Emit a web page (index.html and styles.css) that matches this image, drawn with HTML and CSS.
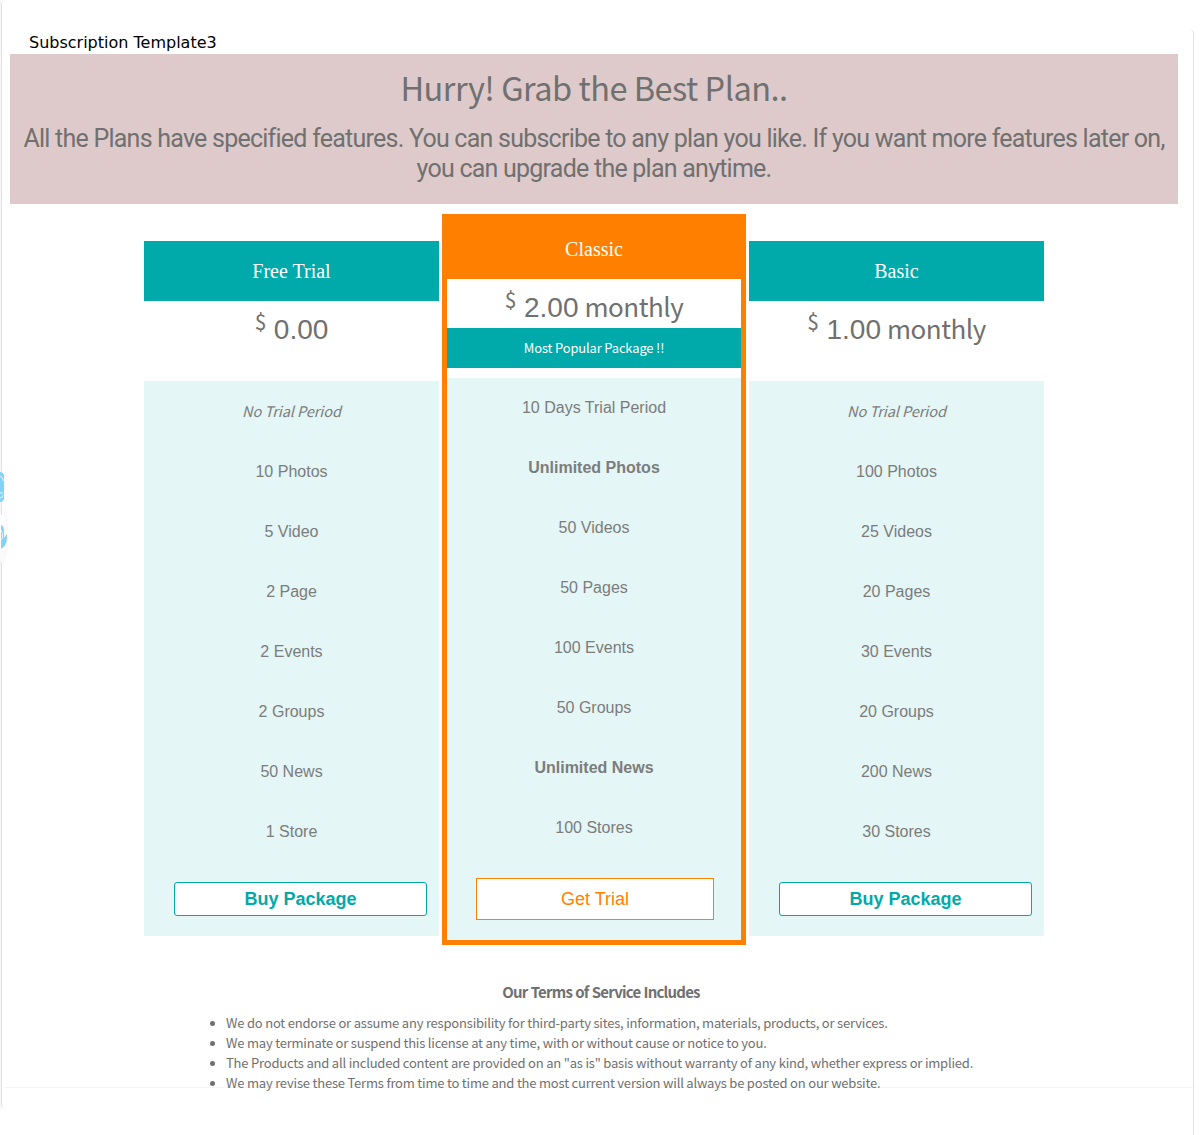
FILE: index.html
```html
<!DOCTYPE html>
<html lang="en">
<head>
<meta charset="utf-8">
<title>Subscription Template3</title>
<link rel="stylesheet" href="styles.css">
</head>
<body>
<div class="frame-left"></div>
<div class="frame-right"></div>
<div class="rule"></div>
<main class="page">
  <div class="title">Subscription Template3</div>
  <header class="banner">
    <h1>Hurry! Grab the Best Plan..</h1>
    <p>All the Plans have specified features. You can subscribe to any plan you like. If you want more features later on, you can upgrade the plan anytime.</p>
  </header>
  <section class="plans">
    <article class="plan">
      <h2>Free Trial</h2>
      <div class="price"><span class="currency">$</span><span class="amount">0.00</span></div>
      <div class="features">
        <ul><li><em>No Trial Period</em></li><li>10 Photos</li><li>5 Video</li><li>2 Page</li><li>2 Events</li><li>2 Groups</li><li>50 News</li><li>1 Store</li></ul>
        <button class="buy">Buy Package</button>
      </div>
    </article>
    <article class="plan featured">
      <h2>Classic</h2>
      <div class="price"><span class="currency">$</span><span class="amount">2.00</span><span class="period">monthly</span></div>
      <div class="ribbon">Most Popular Package !!</div>
      <div class="features">
        <ul><li>10 Days Trial Period</li><li><b>Unlimited Photos</b></li><li>50 Videos</li><li>50 Pages</li><li>100 Events</li><li>50 Groups</li><li><b>Unlimited News</b></li><li>100 Stores</li></ul>
        <button class="buy">Get Trial</button>
      </div>
    </article>
    <article class="plan">
      <h2>Basic</h2>
      <div class="price"><span class="currency">$</span><span class="amount">1.00</span><span class="period">monthly</span></div>
      <div class="features">
        <ul><li><em>No Trial Period</em></li><li>100 Photos</li><li>25 Videos</li><li>20 Pages</li><li>30 Events</li><li>20 Groups</li><li>200 News</li><li>30 Stores</li></ul>
        <button class="buy">Buy Package</button>
      </div>
    </article>
  </section>
  <section class="terms">
    <h3>Our Terms of Service Includes</h3>
    <ul>
      <li><span>We do not endorse or assume any responsibility for third-party sites, information, materials, products, or services.</span></li>
      <li><span>We may terminate or suspend this license at any time, with or without cause or notice to you.</span></li>
      <li><span>The Products and all included content are provided on an "as is" basis without warranty of any kind, whether express or implied.</span></li>
      <li><span>We may revise these Terms from time to time and the most current version will always be posted on our website.</span></li>
    </ul>
  </section>
</main>
<svg class="edge-icons" width="8" height="96" viewBox="0 0 8 96">
  <path d="M0 49H8V97H0Z" fill="#fff"/>
  <path d="M4 38Q8 46 8 58V84Q7 92 3 96H0V84H4V60Z" fill="#fafafa"/>
  <path d="M0 6Q3 6 4 9V33Q3 36 0 36Z" fill="#81d4f7"/>
  <path d="M0 10Q3 11 3.5 15M0 27H3M0 32Q3 31 3.5 29" fill="none" stroke="#fff" stroke-width=".8"/>
  <path d="M1 59Q4 60 4 65V72L7 68V71Q7 80 1 83Z" fill="#81d4f7"/>
  <path d="M1 64Q3 66 2.5 72L1 74" fill="none" stroke="#fff" stroke-width=".8"/>
</svg>
</body>
</html>
```
FILE: styles.css
```css
* { box-sizing: border-box; }
body {
  position: relative;
  margin: 0;
  height: 1135px;
  overflow: hidden;
  background: #fff;
  color: #707070;
  font-family: "Noto Sans CJK JP", "Noto Sans", sans-serif;
}
ul { list-style: none; margin: 0; padding: 0; }
.page { width: 1188px; }
.title {
  height: 54px;
  padding: 33px 0 0 29px;
  color: #000;
  font: 16px/20px "DejaVu Sans", sans-serif;
}
.banner {
  height: 150px;
  margin: 0 10px;
  padding-top: 13px;
  background: #decaca;
  text-align: center;
}
.banner h1 { margin: 0 0 17px; font-weight: 400; font-size: 32.5px; line-height: 40px; letter-spacing: -0.5px; }
.banner p { margin: 0; font: 25px/30px Roboto, sans-serif; letter-spacing: -0.76px; }

.plans {
  display: flex;
  justify-content: center;
  align-items: flex-start;
  gap: 3px;
  padding-top: 10px;
}
.plan { width: 295px; margin-top: 27px; text-align: center; }
.plan h2 {
  height: 60px;
  margin: 0;
  background: #00a9aa;
  color: #fff;
  font: 20px/60px "Liberation Serif", serif;
}
.price { display: flex; justify-content: center; align-items: flex-start; height: 80px; }
.currency { margin-right: 8px; font-size: 21px; line-height: 40px; letter-spacing: -0.5px; }
.amount { font: 28px/57px "Liberation Sans", sans-serif; }
.period { margin-left: 6px; font-size: 26px; line-height: 54px; letter-spacing: -0.5px; }
.features {
  height: 555px;
  padding: 0 12px 20px 30px;
  background: #e4f6f6;
  color: #7c7c7c;
  font: 16px/62px "Liberation Sans", sans-serif;
}
.features ul { margin: 0 -12px 21px -30px; }
.features li { height: 60px; }
.features li:first-child { line-height: 60px; }
.features em { font-family: "Noto Sans CJK JP", sans-serif; font-size: 14.6px; letter-spacing: -0.1px; }
.buy {
  display: block;
  width: 100%;
  height: 34px;
  padding: 0;
  border: 1px solid #00a9aa;
  border-radius: 3px;
  background: #fff;
  color: #00a9aa;
  font: bold 18px "Liberation Sans", sans-serif;
}
.featured { width: 304px; margin-top: 0; border: 5px solid #ff8000; }
.featured h2 { background: #ff8000; }
.featured .price { height: 49px; }
.ribbon {
  height: 40px;
  margin-bottom: 10px;
  background: #00a9aa;
  color: #fff;
  font-size: 13px;
  line-height: 40px;
  letter-spacing: -0.17px;
}
.featured .features { height: 562px; padding: 0 27px 20px 29px; line-height: 60px; }
.featured .features ul { margin: 0 -27px 20px -29px; }
.featured .buy { height: 42px; border-color: #ff8000; border-radius: 0; color: #ff8000; font-weight: 400; }

.terms { padding: 37px 0 0 210px; }
.terms h3 { width: 782px; margin: 0 0 11px; text-align: center; font-size: 15px; line-height: 20px; letter-spacing: -0.8px; word-spacing: 0.6px; }
.terms li { display: flex; align-items: center; height: 20px; font-size: 13px; line-height: 20px; letter-spacing: -0.2px; white-space: nowrap; }
.terms li::before { content: ""; width: 5px; height: 5px; margin-right: 11px; border-radius: 50%; background: #707070; }

.frame-left { position: absolute; left: 0; top: 0; width: 6px; height: 1109px; border-left: 1px solid #f7f7f7; }
.frame-left::before { content: ""; position: absolute; inset: 0; border-left: 1px solid #e2e2e2; border-radius: 6px 0 0 6px; }
.frame-right { position: absolute; left: 1184px; top: 29px; width: 10px; height: 1112px; border-right: 1px solid #e2e2e2; border-radius: 0 5px 0 0; }
.rule { position: absolute; z-index: -1; left: 4px; top: 1087px; width: 1189px; height: 1px; background: #f5f5f5; }
.edge-icons { position: absolute; left: 0; top: 466px; }
```
